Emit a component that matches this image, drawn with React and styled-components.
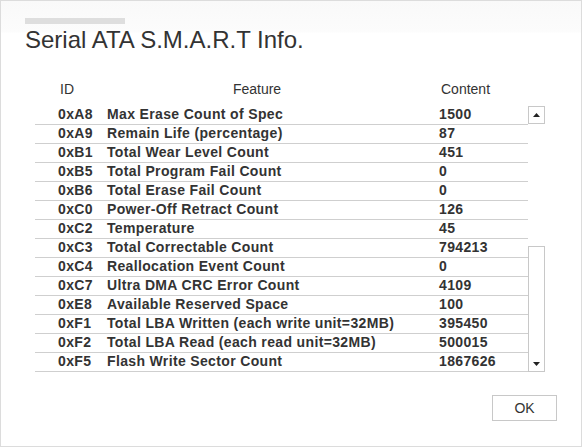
import React from "react";
import styled, { createGlobalStyle } from "styled-components";

const GlobalStyle = createGlobalStyle`
  html, body {
    margin: 0;
    padding: 0;
    background: #fff;
  }
  body {
    font-family: "Liberation Sans", Arial, sans-serif;
    color: #333;
  }
`;

const rows = [
  { id: "0xA8", feature: "Max Erase Count of Spec", value: "1500" },
  { id: "0xA9", feature: "Remain Life (percentage)", value: "87" },
  { id: "0xB1", feature: "Total Wear Level Count", value: "451" },
  { id: "0xB5", feature: "Total Program Fail Count", value: "0" },
  { id: "0xB6", feature: "Total Erase Fail Count", value: "0" },
  { id: "0xC0", feature: "Power-Off Retract Count", value: "126" },
  { id: "0xC2", feature: "Temperature", value: "45" },
  { id: "0xC3", feature: "Total Correctable Count", value: "794213" },
  { id: "0xC4", feature: "Reallocation Event Count", value: "0" },
  { id: "0xC7", feature: "Ultra DMA CRC Error Count", value: "4109" },
  { id: "0xE8", feature: "Available Reserved Space", value: "100" },
  { id: "0xF1", feature: "Total LBA Written (each write unit=32MB)", value: "395450" },
  { id: "0xF2", feature: "Total LBA Read (each read unit=32MB)", value: "500015" },
  { id: "0xF5", feature: "Flash Write Sector Count", value: "1867626" },
];

const Window = styled.div`
  width: 582px;
  height: 447px;
  box-sizing: border-box;
  border: 1px solid #dcdcdc;
  display: flex;
  flex-direction: column;
  background: linear-gradient(#f9f9f9 0, #fcfcfc 31px, #fff 32px);
`;

const Header = styled.div`
  padding: 17px 0 0 24px;
`;

const GrayBar = styled.div`
  width: 100px;
  height: 6px;
  background: #dedede;
`;

const Title = styled.h1`
  margin: 2px 0 0;
  font-size: 24px;
  line-height: 27px;
  font-weight: normal;
  color: #333;
`;

const Table = styled.div`
  margin: 27px 0 0 34px;
  width: 510px;
`;

const HeadRow = styled.div`
  display: grid;
  grid-template-columns: 72px 332px 89px 17px;
  height: 19px;
  line-height: 19px;
  font-size: 14px;
  margin-bottom: 7px;
`;

const HeadCell = styled.div`
  padding-left: ${({ $pl }) => $pl || 0}px;
  padding-right: ${({ $pr }) => $pr || 0}px;
  text-align: ${({ $center }) => ($center ? "center" : "left")};
`;

const Body = styled.div`
  display: flex;
`;

const List = styled.div`
  width: 493px;
`;

const Row = styled.div`
  display: grid;
  grid-template-columns: 72px 332px 89px;
  height: 16px;
  line-height: 16px;
  padding-bottom: 2px;
  border-bottom: 1px solid #cfcfcf;
  font-size: 14px;
  letter-spacing: 0.35px;
  font-weight: bold;
  white-space: nowrap;
`;

const Cell = styled.div`
  padding-left: ${({ $pl }) => $pl || 0}px;
`;

const Scrollbar = styled.div`
  width: 17px;
  display: flex;
  flex-direction: column;
  justify-content: space-between;
`;

const ScrollBox = styled.div`
  box-sizing: border-box;
  width: 17px;
  height: ${({ $h }) => $h}px;
  border: 1px solid #c8c8c8;
  background: #fff;
  display: flex;
  justify-content: center;
  align-items: ${({ $end }) => ($end ? "flex-end" : "center")};
  padding-bottom: ${({ $end }) => ($end ? 5 : 0)}px;
`;

const Footer = styled.div`
  display: flex;
  justify-content: flex-end;
  padding: 23px 24px 0 0;
`;

const OkButton = styled.button`
  width: 65px;
  height: 26px;
  box-sizing: border-box;
  border: 1px solid #c8c8c8;
  background: #fff;
  font-family: "Liberation Sans", Arial, sans-serif;
  font-size: 14px;
  color: #333;
  padding: 0;
`;

const Arrow = ({ down }) => (
  <svg width="7" height="4" viewBox="0 0 7 4">
    <path d={down ? "M0 0H7L3.5 4Z" : "M0 4H7L3.5 0Z"} fill="#222" />
  </svg>
);

export default function App() {
  return (
    <>
      <GlobalStyle />
      <Window>
        <Header>
          <GrayBar />
          <Title>Serial ATA S.M.A.R.T Info.</Title>
        </Header>
        <Table>
          <HeadRow>
            <HeadCell $pl={25}>ID</HeadCell>
            <HeadCell $center $pr={32}>Feature</HeadCell>
            <HeadCell $pl={2}>Content</HeadCell>
            <HeadCell />
          </HeadRow>
          <Body>
            <List>
              {rows.map((r) => (
                <Row key={r.id}>
                  <Cell $pl={23}>{r.id}</Cell>
                  <Cell>{r.feature}</Cell>
                  <Cell>{r.value}</Cell>
                </Row>
              ))}
            </List>
            <Scrollbar>
              <ScrollBox $h={18}>
                <Arrow />
              </ScrollBox>
              <ScrollBox $h={126} $end>
                <Arrow down />
              </ScrollBox>
            </Scrollbar>
          </Body>
        </Table>
        <Footer>
          <OkButton>OK</OkButton>
        </Footer>
      </Window>
    </>
  );
}
